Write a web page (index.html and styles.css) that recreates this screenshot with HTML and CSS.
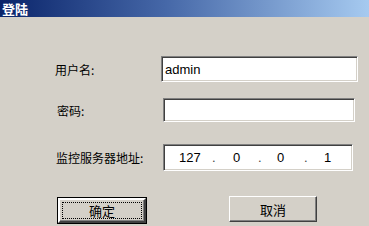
FILE: index.html
```html
<!DOCTYPE html>
<html lang="zh-CN">
<head>
    <meta charset="UTF-8">
    <title>登陆</title>
    <link rel="stylesheet" href="styles.css">
</head>
<body>
    <div class="dialog">
        <div class="titlebar">登陆</div>
        <div class="form">
            <div class="row row-user">
                <label class="label lbl-user">用户名:</label>
                <div class="field field-user"><span class="value">admin</span></div>
            </div>
            <div class="row row-pass">
                <label class="label lbl-pass">密码:</label>
                <div class="field field-pass"></div>
            </div>
            <div class="row row-ip">
                <label class="label lbl-ip">监控服务器地址:</label>
                <div class="field field-ip">
                    <span>127</span><span class="dot">.</span><span>0</span><span class="dot">.</span><span>0</span><span class="dot">.</span><span>1</span>
                </div>
            </div>
            <div class="buttons">
                <button class="btn btn-default"><span class="focus">确定</span></button>
                <button class="btn btn-cancel">取消</button>
            </div>
        </div>
    </div>
</body>
</html>
```

FILE: styles.css
```css
body {
    margin: 0;
    background: #d4d0c8;
    font-family: "Noto Sans CJK SC", "Liberation Sans", sans-serif;
    font-size: 12px;
    color: #000;
    overflow: hidden;
}
.dialog {
    width: 369px;
    height: 226px;
    background: #d4d0c8;
}
.titlebar {
    height: 17px;
    line-height: 17px;
    padding-left: 2px;
    background: linear-gradient(to right, #0a246a, #4668a8 45%, #a6caf0);
    color: #fff;
    font-weight: bold;
    font-size: 13px;
}
.form {
    padding-top: 39px;
}
.row {
    display: flex;
    align-items: center;
}
.label {
    font-size: 12px;
}
.lbl-user { padding-left: 55px; width: 106px; }
.lbl-pass { padding-left: 57px; width: 106px; }
.lbl-ip { padding-left: 56px; width: 107px; }

.field {
    box-sizing: border-box;
    background: #fff;
    border: 1px solid;
    border-color: #808080 #fff #fff #808080;
    box-shadow: inset 1px 1px #404040, inset -1px -1px #d4d0c8;
    display: flex;
    align-items: center;
    font-family: "Liberation Sans", Arial, sans-serif;
    font-size: 13px;
}
.field-user {
    width: 197px;
    height: 26px;
}
.row-user { margin-bottom: 16px; }
.value { padding-left: 3px; }
.field-pass {
    width: 192px;
    height: 24px;
}
.row-pass { margin-bottom: 22px; }
.field-ip {
    width: 190px;
    height: 27px;
    display: grid;
    grid-template-columns: 33px 21px 25px 19px 27px 20px auto;
    padding-left: 15px;
}
.dot { color: #444; }

.buttons {
    display: flex;
    align-items: flex-start;
    margin-top: 25px;
}
.btn {
    box-sizing: border-box;
    width: 88px;
    padding: 0;
    background: #d4d0c8;
    font-family: "Noto Sans CJK SC", sans-serif;
    font-size: 13px;
    color: #000;
    border: 1px solid;
    border-color: #fff #404040 #404040 #fff;
    box-shadow: inset -1px -1px #808080, inset 1px 1px #d4d0c8;
}
.btn-default {
    margin-left: 58px;
    margin-top: 2px;
    height: 25px;
    outline: 1px solid #000;
    border: 2px solid;
    border-color: #fff #404040 #404040 #fff;
    padding: 2px;
}
.focus {
    display: block;
    height: 100%;
    box-sizing: border-box;
    border: 1px dotted #000;
    line-height: 15px;
}
.btn-cancel {
    margin-left: 83px;
    height: 26px;
}
```
